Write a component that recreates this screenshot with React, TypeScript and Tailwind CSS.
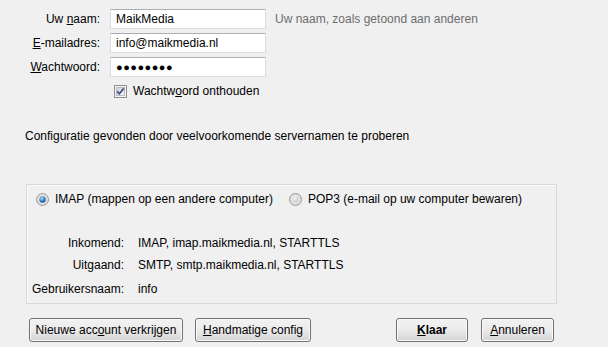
import React from "react";

function Checkbox() {
  return (
    <svg width="13" height="13" viewBox="0 0 13 13" className="shrink-0">
      <defs>
        <linearGradient id="cbg" x1="0" y1="0" x2="1" y2="1">
          <stop offset="0" stopColor="#cbcfd5" />
          <stop offset="1" stopColor="#f6f6f6" />
        </linearGradient>
      </defs>
      <rect x="0.5" y="0.5" width="12" height="12" fill="#f4f4f4" stroke="#8e8f8f" />
      <rect x="2.5" y="2.5" width="8" height="8" fill="url(#cbg)" stroke="#b9bdc3" strokeWidth="1" />
      <path d="M3.2 6.4 L5.3 8.8 L9.8 3.4" fill="none" stroke="#3d4f85" strokeWidth="1.7" />
    </svg>
  );
}

function Radio({ checked }: { checked: boolean }) {
  return (
    <svg width="13" height="13" viewBox="0 0 13 13" className="shrink-0">
      <defs>
        <radialGradient id={checked ? "rgc" : "rgu"} cx="0.4" cy="0.35" r="0.7">
          <stop offset="0" stopColor={checked ? "#b6e0fb" : "#f4f4f4"} />
          <stop offset="0.5" stopColor={checked ? "#3f8fd0" : "#d8d8d8"} />
          <stop offset="1" stopColor={checked ? "#0f3f78" : "#c9c9c9"} />
        </radialGradient>
      </defs>
      <circle cx="6.5" cy="6.5" r="6" fill="#e6e6e6" stroke="#979797" />
      <circle cx="6.5" cy="6.5" r="4.6" fill="#f4f4f4" stroke="#c8c8c8" strokeWidth="0.8" />
      <circle cx="6.5" cy="6.5" r="3.2" fill={`url(#${checked ? "rgc" : "rgu"})`} />
    </svg>
  );
}

function Btn({ children, w, bold }: { children: React.ReactNode; w: string; bold?: boolean }) {
  return (
    <div
      className={`${w} h-[24px] flex items-center justify-center rounded-[3px] border border-[#707070] bg-linear-to-b from-[#f2f2f2] via-[#ebebeb] to-[#d4d4d4] shadow-[inset_0_0_0_1px_#fbfbfb] ${bold ? "font-bold" : ""}`}
    >
      {children}
    </div>
  );
}

export default function App() {
  return (
    <div className="w-[608px] h-[347px] overflow-hidden bg-[#f0f0f0] text-[12px] leading-[15px] text-black font-['Liberation_Sans',Arial,sans-serif]">
      <div className="pt-[9px] grid grid-cols-[100px_156px_auto] gap-x-[10px] gap-y-[4px] items-center">
        <div className="text-right">
          Uw <span className="underline">n</span>aam:
        </div>
        <div className="h-[20px] flex items-center px-[5px] bg-white border border-[#dadde3] border-t-[#abadb3]">MaikMedia</div>
        <div className="text-[#6d6d6d] -ml-[1px]">Uw naam, zoals getoond aan anderen</div>

        <div className="text-right">
          <span className="underline">E</span>-mailadres:
        </div>
        <div className="h-[20px] flex items-center px-[5px] bg-white border border-[#dadde3] border-t-[#abadb3]">info@maikmedia.nl</div>
        <div />

        <div className="text-right">
          <span className="underline">W</span>achtwoord:
        </div>
        <div className="h-[20px] flex items-center px-[5px] bg-white border border-[#dadde3] border-t-[#abadb3] text-[11px] tracking-[0.5px]">
          ●●●●●●●●
        </div>
        <div />

        <div />
        <div className="col-span-2 h-[20px] flex items-center gap-[6px] pl-[4px]">
          <Checkbox />
          <span>
            Wachtw<span className="underline">o</span>ord onthouden
          </span>
        </div>
      </div>

      <div className="mt-[28px] pl-[25px]">Configuratie gevonden door veelvoorkomende servernamen te proberen</div>

      <div className="mt-[40px] ml-[26px] w-[531px] h-[120px] border border-[#d9d9d9] shadow-[inset_1px_1px_0_#fbfbfb]">
        <div className="mt-[7px] pl-[9px] flex items-center h-[15px]">
          <Radio checked />
          <span className="ml-[6px]">IMAP (mappen op een andere computer)</span>
          <span className="ml-[16px]">
            <Radio checked={false} />
          </span>
          <span className="ml-[6px]">POP3 (e-mail op uw computer bewaren)</span>
        </div>
        <div className="mt-[29px] grid grid-cols-[97px_auto] gap-x-[14px]">
          <div className="text-right">Inkomend:</div>
          <div>IMAP, imap.maikmedia.nl, STARTTLS</div>
        </div>
        <div className="mt-[7px] grid grid-cols-[97px_auto] gap-x-[14px]">
          <div className="text-right">Uitgaand:</div>
          <div>SMTP, smtp.maikmedia.nl, STARTTLS</div>
        </div>
        <div className="mt-[9px] grid grid-cols-[97px_auto] gap-x-[14px]">
          <div className="text-right">Gebruikersnaam:</div>
          <div>info</div>
        </div>
      </div>

      <div className="mt-[14px] flex pl-[29px] pr-[54px]">
        <Btn w="w-[154px]">
          <span>
            Nieuwe acc<span className="underline">o</span>unt verkrijgen
          </span>
        </Btn>
        <div className="ml-[12px]">
          <Btn w="w-[116px]">
            <span>
              <span className="underline">H</span>andmatige config
            </span>
          </Btn>
        </div>
        <div className="flex-1" />
        <Btn w="w-[72px]" bold>
          <span>
            <span className="underline">K</span>laar
          </span>
        </Btn>
        <div className="ml-[13px]">
          <Btn w="w-[73px]">
            <span>
              <span className="underline">A</span>nnuleren
            </span>
          </Btn>
        </div>
      </div>
    </div>
  );
}
